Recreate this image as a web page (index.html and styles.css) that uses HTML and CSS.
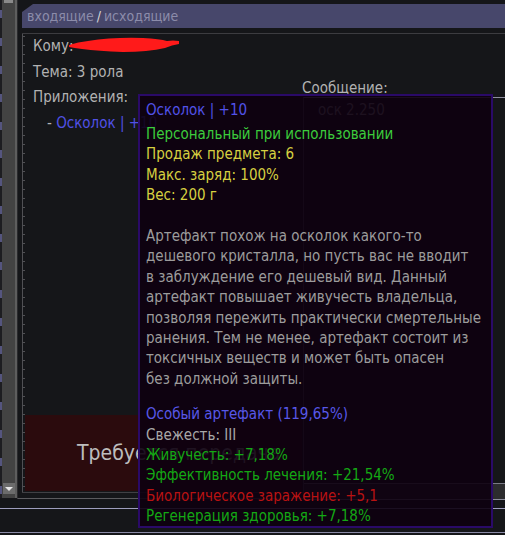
FILE: index.html
```html
<!DOCTYPE html>
<html lang="ru">
<head>
    <meta charset="UTF-8">
    <meta name="viewport" content="width=device-width, initial-scale=1.0">
    <title>Почта</title>
    <link rel="stylesheet" href="styles.css">
</head>
<body>
    <div class="screen">
        <div class="top">
            <div class="sidebar">
                <div class="strip"></div>
                <div class="scrollbar">
                    <div class="arrow-up"></div>
                    <div class="arrow-down"></div>
                </div>
            </div>
            <div class="panel">
                <div class="tab">входящие<span class="slash">/</span>исходящие</div>
                <div class="content">
                    <div class="ruler"></div>
                    <div class="fields">
                        <div class="row">Кому:<svg class="scribble" width="112" height="16" viewBox="0 0 112 16"><path d="M1 8 Q 10 5 20 4 Q 45 0 75 1 Q 92 2 99 4 Q 105 3 111 4 L 111 7 Q 104 8 97 11 Q 80 15 55 15 Q 30 14 14 12 Q 6 11 1 10 Z" fill="#ff1a1a"/></svg></div>
                        <div class="row">Тема: 3 рола</div>
                        <div class="row">Приложения:</div>
                        <div class="row attach">- <span class="link">Осколок | +10</span></div>
                        <div class="action">Требуется передача</div>
                    </div>
                    <div class="message">
                        <div class="message-label">Сообщение:</div>
                        <div class="message-box">
                            <div class="message-text">оск 2.250</div>
                            <div class="hscroll"></div>
                        </div>
                    </div>
                </div>
            </div>
        </div>
        <div class="footer"></div>

        <div class="tooltip">
            <div class="tip-title">Осколок | +10</div>
            <div class="tip-green">Персональный при использовании</div>
            <div class="tip-yellow">Продаж предмета: 6</div>
            <div class="tip-yellow">Макс. заряд: 100%</div>
            <div class="tip-yellow">Вес: 200 г</div>
            <div class="tip-desc">
                <div>Артефакт похож на осколок какого-то</div>
                <div>дешевого кристалла, но пусть вас не вводит</div>
                <div>в заблуждение его дешевый вид. Данный</div>
                <div>артефакт повышает живучесть владельца,</div>
                <div>позволяя пережить практически смертельные</div>
                <div>ранения. Тем не менее, артефакт состоит из</div>
                <div>токсичных веществ и может быть опасен</div>
                <div>без должной защиты.</div>
            </div>
            <div class="tip-stats">
                <div class="tip-blue">Особый артефакт (119,65%)</div>
                <div class="tip-gray">Свежесть: III</div>
                <div class="tip-stat">Живучесть: +7,18%</div>
                <div class="tip-stat">Эффективность лечения: +21,54%</div>
                <div class="tip-red">Биологическое заражение: +5,1</div>
                <div class="tip-stat">Регенерация здоровья: +7,18%</div>
            </div>
        </div>
    </div>
</body>
</html>
```

FILE: styles.css
```css
body {
    margin: 0;
    background-color: #151619;
    font-family: "DejaVu Sans Condensed", "DejaVu Sans", sans-serif;
    font-size: 15px;
    color: #b2b2b2;
    overflow: hidden;
}

.screen {
    position: relative;
    width: 505px;
    height: 535px;
    display: flex;
    flex-direction: column;
}

.top {
    height: 508px;
    display: flex;
    align-items: flex-start;
}

/* left scroll column */
.sidebar {
    width: 17px;
    height: 498px;
    display: flex;
    flex-shrink: 0;
}

.strip {
    width: 2px;
    background: repeating-linear-gradient(to bottom, #1d1d21 0 10px, #55557f 10px 18px, #1d1d21 18px 28px);
}

.scrollbar {
    width: 13px;
    background-color: #434343;
    border-right: 2px solid #5e5e5e;
    display: flex;
    flex-direction: column;
    justify-content: space-between;
    align-items: center;
}

.arrow-up {
    width: 9px;
    height: 3px;
    background-color: #8a8a8a;
}

.arrow-down {
    position: relative;
    width: 12px;
    height: 11px;
    margin-bottom: 4px;
    background-color: #6c6c6c;
}

.arrow-down::after {
    content: "";
    position: absolute;
    left: 2px;
    top: 4px;
    border-left: 4px solid transparent;
    border-right: 4px solid transparent;
    border-top: 4px solid #e8e8e8;
}

/* main panel */
.panel {
    flex: 1;
    height: 499px;
    box-sizing: border-box;
    padding-top: 4px;
    border-left: 1px solid #2a2a2d;
    border-bottom: 1px solid #5a5a5e;
    display: flex;
    flex-direction: column;
}

.tab {
    height: 24px;
    line-height: 24px;
    margin-left: 4px;
    padding-left: 5px;
    background-color: #47476b;
    color: #8c8caa;
    font-size: 14px;
    clip-path: polygon(11px 0, 100% 0, 100% 100%, 0 100%, 0 8px);
}

.slash {
    color: #d6d6d6;
    margin: 0 3px;
}

.content {
    height: 460px;
    box-sizing: border-box;
    margin: 5px 0 0 4px;
    border-top: 1px solid #3c3c40;
    border-bottom: 1px solid #404044;
    display: flex;
}

.ruler {
    width: 2px;
    flex-shrink: 0;
    border-left: 1px solid #505054;
    background-image: linear-gradient(to bottom, transparent 0 8px, #505054 8px 9px);
    background-size: 2px 9px;
    background-position: 0 -6px;
    background-repeat: repeat-y;
}

.fields {
    width: 277px;
    flex-shrink: 0;
    display: flex;
    flex-direction: column;
}

.row {
    line-height: 25.5px;
    padding-left: 8px;
    white-space: nowrap;
}

.scribble {
    vertical-align: middle;
    margin-left: -6px;
    margin-top: -4px;
}

.attach {
    padding-left: 22px;
}

.link {
    color: #5151e6;
}

.action {
    margin-top: auto;
    margin-bottom: 1px;
    height: 76px;
    padding-left: 52px;
    display: flex;
    align-items: center;
    background-color: #2b0b0d;
    color: #bdbdbd;
    font-size: 21px;
    white-space: nowrap;
}

.message {
    flex: 1;
    display: flex;
    flex-direction: column;
}

.message-label {
    margin-top: 45px;
    line-height: 18px;
}

.message-box {
    flex: 1;
    margin: 0 0 -8px 1px;
    border-top: 1px solid #8e8e9e;
    border-left: 1px solid #55555a;
    border-bottom: 1px solid #8e8e9e;
    display: flex;
    flex-direction: column;
}

.message-text {
    flex: 1;
    padding: 3px 14px;
    line-height: 18px;
    color: #a8a8a8;
}

.hscroll {
    height: 15px;
    background-color: #2c2c2e;
    border-top: 1px solid #7a7a86;
}

.footer {
    height: 23px;
    border-top: 1px solid #9d9dbd;
    border-bottom: 1px solid #8a8aa6;
}

/* item tooltip */
.tooltip {
    position: absolute;
    left: 138px;
    top: 94px;
    width: 355px;
    height: 434px;
    box-sizing: border-box;
    padding: 4px 6px 0;
    border: 2px solid #2a0a68;
    background-color: rgba(13, 0, 16, 0.9);
    line-height: 20.4px;
    white-space: nowrap;
}

.tip-title {
    color: #5252e8;
    margin-bottom: 3.6px;
}

.tip-green {
    color: #3ccc3c;
}

.tip-yellow {
    color: #d6d040;
}

.tip-desc {
    margin-top: 20.4px;
    color: #9c9c9c;
}

.tip-stats {
    margin-top: 15px;
}

.tip-blue {
    color: #5858e8;
}

.tip-gray {
    color: #a8a8a8;
}

.tip-stat {
    color: #14a814;
}

.tip-red {
    color: #b81212;
}
```
